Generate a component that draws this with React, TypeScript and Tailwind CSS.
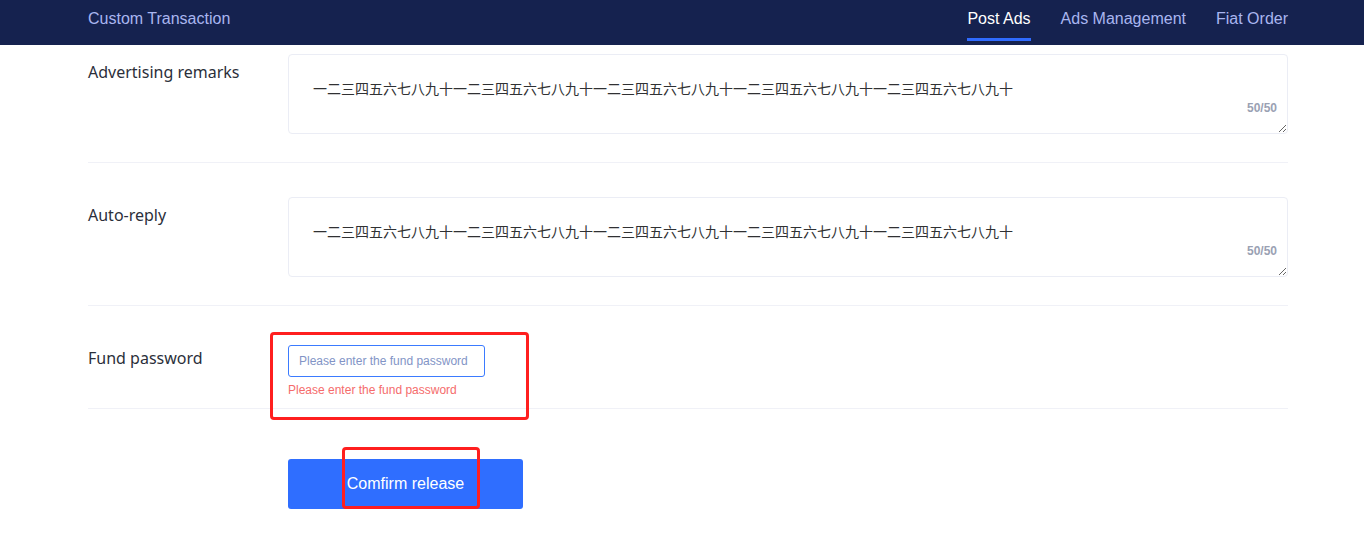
import React from "react";

const TEXT = "一二三四五六七八九十".repeat(5);

const NAV = [
  { label: "Post Ads", active: true },
  { label: "Ads Management", active: false },
  { label: "Fiat Order", active: false },
];

const labelFont = { fontFamily: '"Noto Sans", "Liberation Sans", sans-serif' };

function Header() {
  return (
    <header className="h-[45px] bg-[#15224f]">
      <div className="ml-[88px] flex h-full w-[1200px] items-start justify-between">
        <div className="pt-[9px] text-[16px] leading-[20px] text-[#a9b6f0]">Custom Transaction</div>
        <nav className="flex h-full gap-[30px]">
          {NAV.map((n) => (
            <div
              key={n.label}
              className={
                "relative h-full pt-[9px] text-[16px] leading-[20px] " + (n.active ? "text-white" : "text-[#a9b6f0]")
              }
            >
              {n.label}
              {n.active && <span className="absolute bottom-[4px] left-0 right-0 h-[3px] bg-[#2f6bff]" />}
            </div>
          ))}
        </nav>
      </div>
    </header>
  );
}

function TextareaField({ value }: { value: string }) {
  return (
    <div className="relative">
      <textarea
        readOnly
        value={value}
        className="block h-[80px] w-full resize-y rounded-[4px] border border-[#ebedf5] px-[24px] py-[22px] text-[14px] leading-[22px] text-[#303133] outline-none"
        style={{ fontFamily: '"Noto Sans CJK SC", "Liberation Sans", sans-serif' }}
      />
      <span className="absolute bottom-[19px] right-[11px] bg-white text-[12px] font-semibold leading-[14px] text-[#9aa1b3]">50/50</span>
    </div>
  );
}

function Row({ label, children, className }: { label: string; children: React.ReactNode; className: string }) {
  return (
    <div className={"flex border-b border-[#f0f1f7] " + className}>
      <div className="mt-[6px] w-[200px] shrink-0 text-[16px] leading-[24px] text-[#2b2f3a]" style={labelFont}>{label}</div>
      <div className="flex-1">{children}</div>
    </div>
  );
}

export default function App() {
  return (
    <div className="min-h-[556px] bg-white" style={{ fontFamily: '"Liberation Sans", Arial, sans-serif' }}>
      <Header />
      <div className="ml-[88px] w-[1200px]">
        <Row label="Advertising remarks" className="pt-[9px] pb-[28px]">
          <TextareaField value={TEXT} />
        </Row>
        <Row label="Auto-reply" className="pt-[34px] pb-[28px]">
          <TextareaField value={TEXT} />
        </Row>
        <div className="flex border-b border-[#f0f1f7] pt-[39px] pb-[10px]">
          <div className="mt-[1px] w-[200px] shrink-0 text-[16px] leading-[24px] text-[#2b2f3a]" style={labelFont}>Fund password</div>
          <div className="relative flex-1">
            <input
              type="password"
              placeholder="Please enter the fund password"
              className="block h-[32px] w-[197px] rounded-[3px] border border-[#3b7bff] px-[10px] text-[12px] text-[#303133] outline-none placeholder:text-[#8294c6]"
            />
            <div className="mt-[5px] text-[12px] leading-[16px] text-[#f56c6c]">Please enter the fund password</div>
            <div className="pointer-events-none absolute left-[-18px] top-[-13px] h-[88px] w-[259px] rounded-[4px] border-[3px] border-[#ff1f1f]" />
          </div>
        </div>
        <div className="pl-[200px] pt-[50px]">
          <div className="relative w-[235px]">
            <button className="h-[50px] w-[235px] rounded-[3px] bg-[#2f6eff] text-[16px] text-white">Comfirm release</button>
            <div className="pointer-events-none absolute left-[54px] top-[-12px] h-[62px] w-[138px] rounded-[4px] border-[3px] border-[#ff1f1f]" />
          </div>
        </div>
      </div>
    </div>
  );
}
